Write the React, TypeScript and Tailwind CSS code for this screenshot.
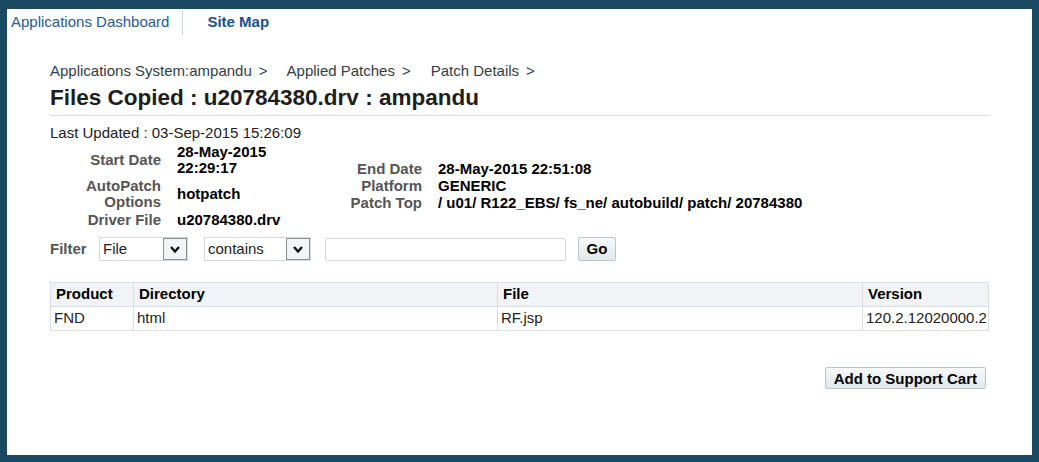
import React from "react";

const font = { fontFamily: '"Liberation Sans", Arial, sans-serif' };

function Chevron() {
  return (
    <svg width="12" height="9" viewBox="0 0 12 9" className="block">
      <polyline points="2,2 6,6.5 10,2" fill="none" stroke="#111" strokeWidth="2.4" />
    </svg>
  );
}

function FakeSelect({ label, width }: { label: string; width: string }) {
  return (
    <div className={`flex h-[24px] items-stretch border border-[#d3d8dc] bg-white ${width}`}>
      <span className="flex flex-1 items-center pl-[3px] text-[15px] text-[#222]">{label}</span>
      <span className="flex w-[24px] items-center justify-center border border-[#8a8f93] bg-[#f3f4f5]">
        <Chevron />
      </span>
    </div>
  );
}

const details = [
  { label: "Start Date", value: "28-May-2015 22:29:17" },
  { label: "AutoPatch Options", value: "hotpatch" },
  { label: "Driver File", value: "u20784380.drv" },
];

const details2 = [
  { label: "End Date", value: "28-May-2015 22:51:08" },
  { label: "Platform", value: "GENERIC" },
  { label: "Patch Top", value: "/ u01/ R122_EBS/ fs_ne/ autobuild/ patch/ 20784380" },
];

export default function App() {
  return (
    <div style={font} className="flex h-[462px] w-full flex-col bg-[#1a4961] pt-[9px] pr-[7px] pb-[7px] pl-[7px]">
      <div className="flex-1 bg-white">
        <nav className="flex h-[26px] items-center pl-[4px] text-[15px]">
          <span className="pr-[13px] text-[#235c99]">Applications Dashboard</span>
          <span className="mt-px h-[25px] w-px self-start bg-[#ccd6de]" />
          <span className="pl-[24px] font-bold text-[#1c4f8c]">Site Map</span>
        </nav>

        <div className="px-[43px]">
          <div className="mt-[27px] text-[15px] leading-[17px] text-[#333d47]">
            <span>Applications System:ampandu</span>
            <span className="ml-[7px] mr-[19px]">&gt;</span>
            <span>Applied Patches</span>
            <span className="ml-[7px] mr-[20px]">&gt;</span>
            <span>Patch Details</span>
            <span className="ml-[7px]">&gt;</span>
          </div>
          <h1 className="mt-[6px] text-[22.5px] font-bold leading-[26px] text-[#1e1e1e]">
            Files Copied : u20784380.drv : ampandu
          </h1>
          <div className="mt-[4px] h-px bg-[#d9dde0]" />

          <div className="mt-[9px] text-[15px] leading-4 text-[#222]">Last Updated : 03-Sep-2015 15:26:09</div>

          <div className="mt-[3px] flex items-center text-[15px] font-bold leading-4">
            <div className="grid grid-cols-[111px_112px] gap-x-4 gap-y-[2px]">
              {details.map((d) => (
                <React.Fragment key={d.label}>
                  <span className="self-center text-right text-[#555]">{d.label}</span>
                  <span className="self-center text-black">{d.value}</span>
                </React.Fragment>
              ))}
            </div>
            <div className="grid grid-cols-[133px_auto] gap-x-4 gap-y-px">
              {details2.map((d) => (
                <React.Fragment key={d.label}>
                  <span className="text-right text-[#555]">{d.label}</span>
                  <span className="text-black">{d.value}</span>
                </React.Fragment>
              ))}
            </div>
          </div>

          <div className="mt-[9px] flex items-center text-[15px]">
            <span className="w-[49px] font-bold text-[#555]">Filter</span>
            <FakeSelect label="File" width="w-[89px]" />
            <div className="w-[16px]" />
            <FakeSelect label="contains" width="w-[107px]" />
            <div className="w-[14px]" />
            <div className="h-[23px] w-[241px] rounded-[2px] border border-[#d3d8dc] bg-white" />
            <button className="ml-[12px] h-[24px] w-[38px] rounded-[2px] border border-[#bcc5c9] bg-gradient-to-b from-[#f6f8f9] to-[#e4e8ea] text-[15px] font-bold text-black">
              Go
            </button>
          </div>

          <table className="mt-[21px] w-full table-fixed border-collapse text-[15px]">
            <colgroup>
              <col className="w-[83px]" />
              <col className="w-[364px]" />
              <col className="w-[365px]" />
              <col />
            </colgroup>
            <thead>
              <tr className="h-[24px] bg-[#f1f3f6]">
                {["Product", "Directory", "File", "Version"].map((h) => (
                  <th key={h} className="border border-[#dadee2] px-[5px] text-left font-bold text-black">
                    {h}
                  </th>
                ))}
              </tr>
            </thead>
            <tbody>
              <tr className="h-[24px]">
                {["FND", "html", "RF.jsp", "120.2.12020000.2"].map((c) => (
                  <td key={c} className="border border-[#dadee2] px-[3px] text-[#222]">
                    {c}
                  </td>
                ))}
              </tr>
            </tbody>
          </table>

          <div className="mt-[36px] flex justify-end pr-[3px]">
            <button className="h-[22px] rounded-[2px] border border-[#bcc5c9] bg-gradient-to-b from-[#f6f8f9] to-[#e4e8ea] px-[8px] text-[15px] font-bold text-black">
              Add to Support Cart
            </button>
          </div>
        </div>
      </div>
    </div>
  );
}
